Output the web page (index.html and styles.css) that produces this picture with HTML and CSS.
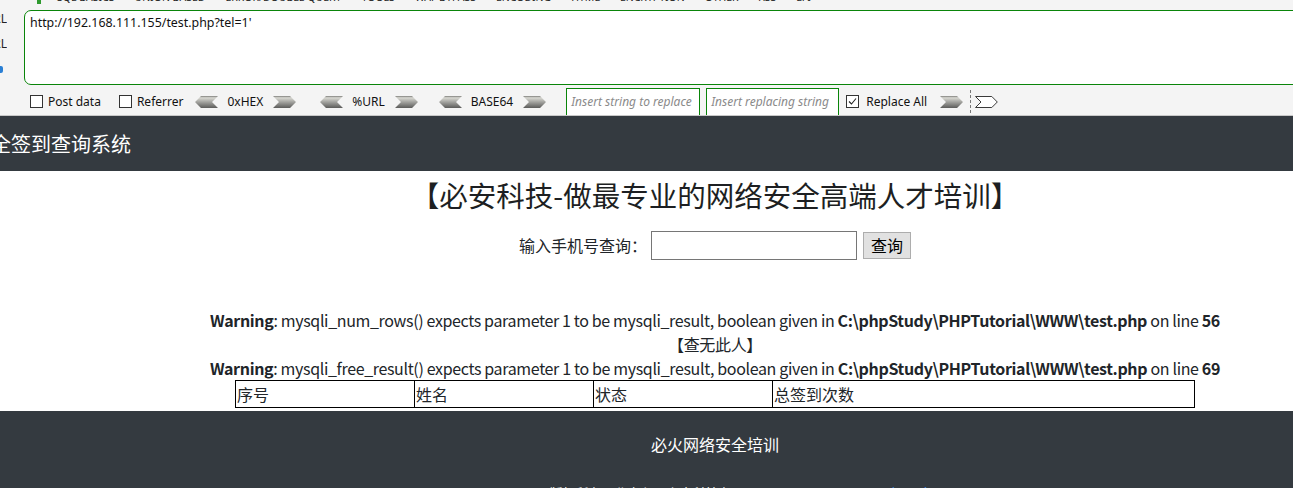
FILE: index.html
```html
<!DOCTYPE html>
<html lang="zh-CN">
<head>
<meta charset="utf-8">
<title>安全签到查询系统</title>
<link rel="stylesheet" href="styles.css">
</head>
<body>
<div class="hackbar">
  <div class="hb-menu">
    <span class="hb-dot"></span>
    <span>SQL BASICS</span>
    <span>UNION BASED</span>
    <span>ERROR/DOUBLE QUERY</span>
    <span>TOOLS</span>
    <span>WAF BYPASS</span>
    <span>ENCODING</span>
    <span>HTML</span>
    <span>ENCRYPTION</span>
    <span>OTHER</span>
    <span>XSS</span>
    <span>LFI</span>
  </div>
  <div class="hb-main">
    <div class="hb-side">
      <div class="hb-side-item"><span>Load URL</span></div>
      <div class="hb-side-item"><span>Split URL</span></div>
      <div class="hb-side-item hb-side-exec"><span class="hb-exec-icon"></span></div>
    </div>
    <div class="hb-url">http://192.168.111.155/test.php?tel=1'</div>
  </div>
  <div class="hb-tools">
    <span class="hb-check"></span><span class="hb-label">Post data</span>
    <span class="hb-check hb-cb2"></span><span class="hb-label">Referrer</span>
    <span class="hb-enc hb-enc1">
      <svg class="hb-arrow" width="23" height="12" viewBox="0 0 23 12"><defs><linearGradient id="g1" x1="0" y1="0" x2="0" y2="1"><stop offset="0" stop-color="#7d7d7a"/><stop offset="0.15" stop-color="#d8d8d2"/><stop offset="0.5" stop-color="#a3a39f"/><stop offset="1" stop-color="#5c5c5a"/></linearGradient></defs><polygon points="0,6 6,0 23,0 17,6 23,12 6,12" fill="url(#g1)"/></svg>
      <span class="hb-enc-label">0xHEX</span>
      <svg class="hb-arrow" width="23" height="12" viewBox="0 0 23 12"><polygon points="0,0 17,0 23,6 17,12 0,12 6,6" fill="url(#g1)"/></svg>
    </span>
    <span class="hb-enc hb-enc2">
      <svg class="hb-arrow" width="23" height="12" viewBox="0 0 23 12"><polygon points="0,6 6,0 23,0 17,6 23,12 6,12" fill="url(#g1)"/></svg>
      <span class="hb-enc-label">%URL</span>
      <svg class="hb-arrow" width="23" height="12" viewBox="0 0 23 12"><polygon points="0,0 17,0 23,6 17,12 0,12 6,6" fill="url(#g1)"/></svg>
    </span>
    <span class="hb-enc hb-enc3">
      <svg class="hb-arrow" width="23" height="12" viewBox="0 0 23 12"><polygon points="0,6 6,0 23,0 17,6 23,12 6,12" fill="url(#g1)"/></svg>
      <span class="hb-enc-label">BASE64</span>
      <svg class="hb-arrow" width="23" height="12" viewBox="0 0 23 12"><polygon points="0,0 17,0 23,6 17,12 0,12 6,6" fill="url(#g1)"/></svg>
    </span>
    <span class="hb-input hb-in1">Insert string to replace</span>
    <span class="hb-input hb-in2">Insert replacing string</span>
    <span class="hb-check hb-cb3"><svg width="11" height="11" viewBox="0 0 11 11"><polyline points="2,5.5 4.5,8 9,2.5" fill="none" stroke="#222" stroke-width="1.1"/></svg></span>
    <span class="hb-label hb-l3">Replace All</span>
    <svg class="hb-arrow hb-go" width="23" height="12" viewBox="0 0 23 12"><polygon points="0,0 17,0 23,6 17,12 0,12 6,6" fill="url(#g1)"/></svg>
    <span class="hb-sep"></span>
    <svg class="hb-arrow hb-go2" width="23" height="12" viewBox="0 0 23 12"><polygon points="0.5,0.5 16.8,0.5 22.3,6 16.8,11.5 0.5,11.5 6,6" fill="#fff" stroke="#3a3a3a" stroke-width="1"/></svg>
  </div>
</div>

<nav class="navbar"><span class="brand">安全签到查询系统</span></nav>

<main class="page">
  <h1 class="title">【必安科技-做最专业的网络安全高端人才培训】</h1>
  <form class="search">
    <label class="search-label">输入手机号查询：</label>
    <span class="search-input"></span>
    <button class="search-btn" type="button">查询</button>
  </form>
  <div class="result">
    <div class="line"><b>Warning</b>: mysqli_num_rows() expects parameter 1 to be mysqli_result, boolean given in <b>C:\phpStudy\PHPTutorial\WWW\test.php</b> on line <b>56</b></div>
    <div class="line">【查无此人】</div>
    <div class="line"><b>Warning</b>: mysqli_free_result() expects parameter 1 to be mysqli_result, boolean given in <b>C:\phpStudy\PHPTutorial\WWW\test.php</b> on line <b>69</b></div>
  </div>
  <table class="list">
    <tr>
      <td class="c-narrow">序号</td>
      <td class="c-narrow">姓名</td>
      <td class="c-narrow">状态</td>
      <td>总签到次数</td>
    </tr>
  </table>
</main>

<footer class="footer">
  <div class="footer-inner">
    <p class="footer-title">必火网络安全培训</p>
    <p class="footer-copy">版权所有：北京必火安全科技有限公司 Copyright © 2019 &nbsp; <a class="footer-link">京ICP备</a></p>
  </div>
</footer>
</body>
</html>
```

FILE: styles.css
```css
* { box-sizing: border-box; }
html, body { margin: 0; padding: 0; }
body {
  width: 1293px;
  height: 488px;
  overflow: hidden;
  background: #fff;
  color: #212529;
  font-family: "Noto Sans CJK SC", "Noto Sans", sans-serif;
}

/* ---------- hackbar ---------- */
.hackbar {
  height: 116px;
  background: #f4f4f4;
  border-bottom: 1px solid #c8c8c8;
  overflow: hidden;
  font-family: "Noto Sans", "Noto Sans CJK SC", sans-serif;
}
.hb-menu {
  display: flex;
  align-items: center;
  height: 14px;
  margin-top: -10px;
  padding-left: 37px;
  gap: 20px;
  font-size: 10.5px;
  line-height: 14px;
  color: #1e1e1e;
  white-space: nowrap;
}
.hb-dot {
  width: 4px;
  height: 4px;
  margin-top: 10px;
  background: #2e9a2e;
  margin-right: -4px;
}
.hb-main {
  display: flex;
  height: 75px;
  margin-top: 6px;
}
.hb-side {
  width: 24px;
  flex: none;
  display: flex;
  flex-direction: column;
  padding-right: 17px;
}
.hb-side-item {
  height: 18px;
  margin-bottom: 9px;
  display: flex;
  justify-content: flex-end;
  align-items: center;
  overflow: hidden;
  white-space: nowrap;
  font-size: 12px;
  color: #222;
}
.hb-side-exec { margin-right: 4px; }
.hb-exec-icon {
  flex: none;
  width: 12px;
  height: 7px;
  border-radius: 2px;
  background: #2a7fd4;
  margin-top: 2px;
}
.hb-url {
  flex: none;
  width: 1290px;
  height: 75px;
  background: #fff;
  border: 1px solid #0a850a;
  border-radius: 7px;
  padding: 4px 5px;
  font-size: 12.4px;
  line-height: 16px;
  color: #111;
}
.hb-tools {
  display: flex;
  align-items: center;
  height: 30px;
  padding-left: 30px;
  padding-top: 3px;
  font-size: 12px;
  color: #111;
  white-space: nowrap;
}
.hb-check {
  flex: none;
  width: 13px;
  height: 13px;
  border: 1px solid #333;
  background: #fff;
  display: flex;
  align-items: center;
  justify-content: center;
}
.hb-cb2 { margin-left: 18px; }
.hb-cb3 { margin-left: 7px; }
.hb-label { margin-left: 5px; }
.hb-l3 { margin-left: 7px; }
.hb-enc {
  display: flex;
  align-items: center;
}
.hb-enc1 { margin-left: 12px; }
.hb-enc2 { margin-left: 24px; }
.hb-enc3 { margin-left: 21px; }
.hb-enc-label { padding: 0 10px 0 9px; }
.hb-arrow { flex: none; display: block; }
.hb-input {
  flex: none;
  height: 28px;
  border: 1px solid #0a850a;
  background: #fff;
  padding: 0 4px;
  line-height: 26px;
  overflow: hidden;
  font-style: italic;
  color: #8a8a8a;
}
.hb-in1 { width: 134px; margin-left: 20px; }
.hb-in2 { width: 133px; margin-left: 6px; }
.hb-go { margin-left: 13px; }
.hb-sep {
  width: 0;
  height: 23px;
  border-left: 1px dashed #777;
  margin-left: 7px;
}
.hb-go2 { margin-left: 4px; }

/* ---------- navbar ---------- */
.navbar {
  height: 55px;
  background: #343a40;
  display: flex;
  align-items: center;
}
.brand {
  margin-left: -29px;
  font-size: 20px;
  line-height: 30px;
  color: #fff;
  white-space: nowrap;
}

/* ---------- main ---------- */
.page {
  width: 1430px;
  text-align: center;
}
.title {
  margin: 7px 0 0;
  font-size: 28.5px;
  line-height: 34px;
  font-weight: normal;
  color: #1d1f22;
}
.search {
  display: flex;
  justify-content: center;
  align-items: center;
  margin: 18px 0 0;
  height: 30px;
  font-size: 16px;
}
.search-input {
  width: 206px;
  height: 29px;
  margin-left: 4px;
  border: 1px solid #767676;
  background: #fff;
}
.search-btn {
  width: 48px;
  height: 27px;
  margin-left: 6px;
  padding: 0;
  border: 1px solid #adadad;
  background: #e1e1e1;
  font-family: inherit;
  font-size: 16px;
  color: #000;
}
.result {
  margin-top: 48px;
  font-size: 16px;
  line-height: 24px;
  letter-spacing: -0.35px;
}
.result b { font-weight: bold; }
.list {
  width: 960px;
  margin: 0 auto;
  border-collapse: collapse;
  border: 1px solid #000;
  font-size: 16px;
}
.list td {
  border: 1px solid #000;
  height: 27px;
  padding: 0 1px;
  text-align: left;
  line-height: 24px;
}
.c-narrow { width: 179px; }

/* ---------- footer ---------- */
.footer {
  margin-top: 3px;
  height: 90px;
  background: #343a40;
  color: #fff;
}
.footer-inner {
  width: 1430px;
  text-align: center;
  padding-top: 21px;
  font-size: 16px;
  line-height: 24px;
}
.footer-title { margin: 0; }
.footer-copy {
  margin: 27px 0 0;
  padding-left: 53px;
  font-size: 13px;
  line-height: 20px;
}
.footer-link { color: #3b8ef0; }
```
